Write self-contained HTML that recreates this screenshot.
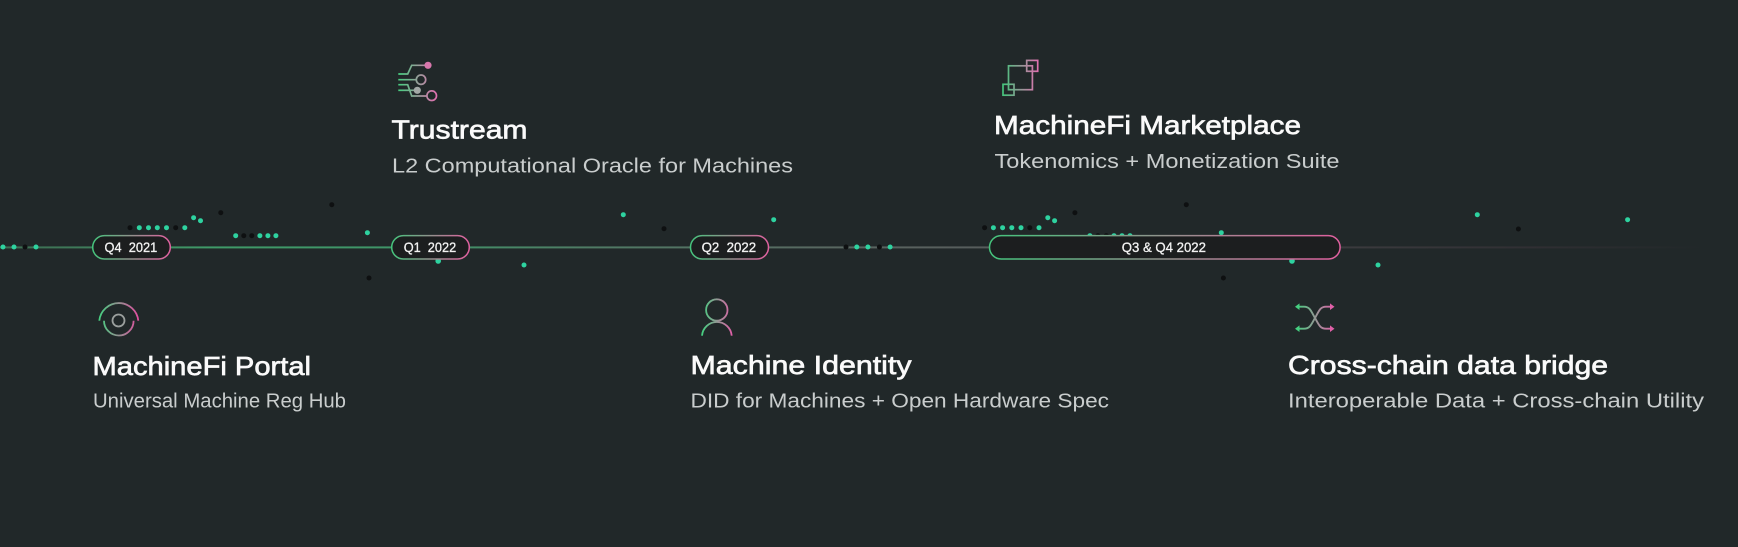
<!DOCTYPE html>
<html><head><meta charset="utf-8">
<style>
html,body{margin:0;padding:0;background:#212829;width:1738px;height:547px;overflow:hidden}
svg{display:block}
text{font-family:"Liberation Sans",sans-serif;white-space:pre}
.t{font-size:26px;font-weight:400;fill:#fafafa;stroke:#fafafa;stroke-width:.65px}
.s{font-size:20px;fill:#c9cdcd}
.p{font-size:14px;font-weight:400;fill:#f2f2f2;stroke:#f2f2f2;stroke-width:.3px}
.g circle{fill:#2ed3a0}
.b circle{fill:#0e1011}
</style></head><body>
<svg width="1738" height="547" viewBox="0 0 1738 547" xmlns="http://www.w3.org/2000/svg">
<defs>
<linearGradient id="gp"><stop offset="0" stop-color="#45c47c"/><stop offset="1" stop-color="#e0609f"/></linearGradient>
<linearGradient id="gu" gradientUnits="userSpaceOnUse" x1="398" y1="0" x2="436" y2="0"><stop offset="0" stop-color="#45d080"/><stop offset="1" stop-color="#e070b0"/></linearGradient>
<linearGradient id="gm" gradientUnits="userSpaceOnUse" x1="1003" y1="0" x2="1038" y2="0"><stop offset="0" stop-color="#45c47c"/><stop offset="1" stop-color="#e070b0"/></linearGradient>
<linearGradient id="ga" gradientUnits="userSpaceOnUse" x1="99" y1="0" x2="138" y2="0"><stop offset="0" stop-color="#45d080"/><stop offset="1" stop-color="#e050a0"/></linearGradient>
<linearGradient id="gi" gradientUnits="userSpaceOnUse" x1="702" y1="0" x2="732" y2="0"><stop offset="0" stop-color="#45d080"/><stop offset="1" stop-color="#e060a8"/></linearGradient>
<linearGradient id="gx" gradientUnits="userSpaceOnUse" x1="1296" y1="0" x2="1334" y2="0"><stop offset="0" stop-color="#45d080"/><stop offset="1" stop-color="#e060a8"/></linearGradient>
<linearGradient id="ln" gradientUnits="userSpaceOnUse" x1="0" y1="0" x2="1738" y2="0">
<stop offset="0" stop-color="#3c6a50"/><stop offset=".06" stop-color="#3f7f5c"/><stop offset=".12" stop-color="#3f9a68"/><stop offset=".24" stop-color="#3f9468"/><stop offset=".34" stop-color="#4f7a64"/><stop offset=".5" stop-color="#596460"/><stop offset=".58" stop-color="#555a5a"/><stop offset=".78" stop-color="#3a3a3d"/><stop offset=".88" stop-color="#302f33"/><stop offset=".98" stop-color="#212829"/></linearGradient>
</defs>
<rect width="1738" height="547" fill="#212829"/>
<rect x="0" y="246.4" width="1738" height="2" fill="url(#ln)"/>

<g class="b">
<circle cx="25" cy="247" r="2.5"/><circle cx="130" cy="227.7" r="2.5"/><circle cx="175.7" cy="227.7" r="2.5"/><circle cx="220.8" cy="212.7" r="2.5"/><circle cx="243.8" cy="235.7" r="2.5"/><circle cx="251.8" cy="235.7" r="2.5"/><circle cx="331.8" cy="204.7" r="2.5"/><circle cx="369" cy="278" r="2.5"/><circle cx="664" cy="228.7" r="2.5"/><circle cx="846" cy="247" r="2.5"/><circle cx="879.4" cy="247" r="2.5"/><circle cx="984.6" cy="227.7" r="2.5"/><circle cx="1029.8" cy="227.7" r="2.5"/><circle cx="1074.9" cy="212.7" r="2.5"/><circle cx="1097.9" cy="235.7" r="2.5"/><circle cx="1106.3" cy="235.7" r="2.5"/><circle cx="1186.3" cy="204.7" r="2.5"/><circle cx="1223.4" cy="278" r="2.5"/><circle cx="1518.4" cy="229" r="2.5"/>
</g>
<g class="g">
<circle cx="3" cy="247" r="2.5"/><circle cx="14" cy="247" r="2.5"/><circle cx="36" cy="247" r="2.5"/><circle cx="139.3" cy="227.7" r="2.5"/><circle cx="148.5" cy="227.7" r="2.5"/><circle cx="157.3" cy="227.7" r="2.5"/><circle cx="166.5" cy="227.7" r="2.5"/><circle cx="184.8" cy="227.7" r="2.5"/><circle cx="193.6" cy="217.7" r="2.5"/><circle cx="200.5" cy="220.7" r="2.5"/><circle cx="235.7" cy="235.7" r="2.5"/><circle cx="259.9" cy="235.7" r="2.5"/><circle cx="267.9" cy="235.7" r="2.5"/><circle cx="275.9" cy="235.7" r="2.5"/><circle cx="367.4" cy="232.7" r="2.5"/><circle cx="438.2" cy="261" r="2.8"/><circle cx="524" cy="265" r="2.5"/><circle cx="623.3" cy="214.7" r="2.5"/><circle cx="773.7" cy="219.7" r="2.5"/><circle cx="856.8" cy="247" r="2.5"/><circle cx="867.9" cy="247" r="2.5"/><circle cx="890.1" cy="247" r="2.5"/><circle cx="993.4" cy="227.7" r="2.5"/><circle cx="1002.6" cy="227.7" r="2.5"/><circle cx="1011.8" cy="227.7" r="2.5"/><circle cx="1021" cy="227.7" r="2.5"/><circle cx="1039" cy="227.7" r="2.5"/><circle cx="1047.8" cy="217.7" r="2.5"/><circle cx="1054.6" cy="220.7" r="2.5"/><circle cx="1089.9" cy="235.7" r="2.5"/><circle cx="1114" cy="235.7" r="2.5"/><circle cx="1122" cy="235.7" r="2.5"/><circle cx="1130" cy="235.7" r="2.5"/><circle cx="1221.3" cy="232.7" r="2.5"/><circle cx="1292" cy="261" r="2.8"/><circle cx="1378" cy="265" r="2.5"/><circle cx="1477.3" cy="214.7" r="2.5"/><circle cx="1627.6" cy="219.7" r="2.5"/>
</g>

<g fill="#1c1e1f" stroke="url(#gp)" stroke-width="1.5">
<rect x="92.7" y="235.6" width="77.6" height="23.4" rx="11.7"/>
<rect x="391.7" y="235.6" width="77.6" height="23.4" rx="11.7"/>
<rect x="690.5" y="235.6" width="78" height="23.4" rx="11.7"/>
<rect x="989.5" y="235.6" width="350.6" height="23.4" rx="11.7"/>
</g>
<text class="p" x="104.5" y="252" textLength="52.8" lengthAdjust="spacingAndGlyphs">Q4  2021</text>
<text class="p" x="403.7" y="252" textLength="52.5" lengthAdjust="spacingAndGlyphs">Q1  2022</text>
<text class="p" x="701.6" y="252" textLength="54.6" lengthAdjust="spacingAndGlyphs">Q2  2022</text>
<text class="p" x="1121.7" y="252" textLength="84.3" lengthAdjust="spacingAndGlyphs">Q3 &amp; Q4 2022</text>

<text class="t" x="92.5" y="375" textLength="218.5" lengthAdjust="spacingAndGlyphs">MachineFi Portal</text>
<text class="s" x="93" y="407.5" textLength="253" lengthAdjust="spacingAndGlyphs">Universal Machine Reg Hub</text>
<text class="t" x="391.5" y="138.3" textLength="136" lengthAdjust="spacingAndGlyphs">Trustream</text>
<text class="s" x="392" y="172.5" textLength="401" lengthAdjust="spacingAndGlyphs">L2 Computational Oracle for Machines</text>
<text class="t" x="994" y="134" textLength="307" lengthAdjust="spacingAndGlyphs">MachineFi Marketplace</text>
<text class="s" x="994.5" y="168" textLength="345" lengthAdjust="spacingAndGlyphs">Tokenomics + Monetization Suite</text>
<text class="t" x="690.5" y="374" textLength="221" lengthAdjust="spacingAndGlyphs">Machine Identity</text>
<text class="s" x="690.5" y="407.5" textLength="418.5" lengthAdjust="spacingAndGlyphs">DID for Machines + Open Hardware Spec</text>
<text class="t" x="1288" y="374" textLength="320" lengthAdjust="spacingAndGlyphs">Cross-chain data bridge</text>
<text class="s" x="1288" y="407.5" textLength="416" lengthAdjust="spacingAndGlyphs">Interoperable Data + Cross-chain Utility</text>

<!-- Trustream icon -->
<g fill="none" stroke="url(#gu)" stroke-width="1.7">
<path d="M398.3 74H407.7L411.7 65.3H425"/>
<path d="M398.3 79.7H416.3"/>
<circle cx="421" cy="79.7" r="4.7"/>
<path d="M398.3 84.7H407.7L411.7 96H427"/>
<path d="M398.3 90.3H414"/>
<circle cx="431.7" cy="95.7" r="4.8"/>
</g>
<circle cx="428" cy="65.3" r="3.6" fill="#d877ac"/>
<circle cx="417.3" cy="90.3" r="3.6" fill="#a3a8a6"/>

<!-- Marketplace icon -->
<g fill="none" stroke="url(#gm)" stroke-width="1.7">
<rect x="1003" y="84.3" width="11" height="10.9"/>
<rect x="1008.5" y="65.8" width="23.9" height="23.9"/>
<rect x="1026.7" y="60.4" width="11" height="10.9"/>
</g>

<!-- Portal icon -->
<g fill="none" stroke="url(#ga)" stroke-width="1.8">
<path d="M99.3 320.7A19.6 19.6 0 0 1 138.3 320.7"/>
<path d="M104 320.7A14.8 14.8 0 0 0 133.6 320.7"/>
<circle cx="118.5" cy="320.5" r="6" stroke="#9ba09e"/>
</g>

<!-- Identity icon -->
<g fill="none" stroke="url(#gi)" stroke-width="1.8">
<circle cx="716.8" cy="310" r="10.7"/>
<path d="M702 335.7A14.9 14.9 0 0 1 731.7 335.7"/>
</g>

<!-- Cross-chain icon -->
<g fill="none" stroke="url(#gx)" stroke-width="1.9">
<path d="M1298 306.7H1304C1310 306.7 1311 311 1315 318C1319 325 1320 328.7 1326 328.7H1332"/>
<path d="M1298 328.7H1304C1310 328.7 1311 325 1315 318C1319 311 1320 306.7 1326 306.7H1332"/>
</g>
<path d="M1295 306.7L1299.5 303.4V310ZM1295 328.7L1299.5 325.4V332Z" fill="#45d080"/>
<path d="M1334.5 306.7L1330 303.4V310ZM1334.5 328.7L1330 325.4V332Z" fill="#e060a8"/>
</svg>
</body></html>
